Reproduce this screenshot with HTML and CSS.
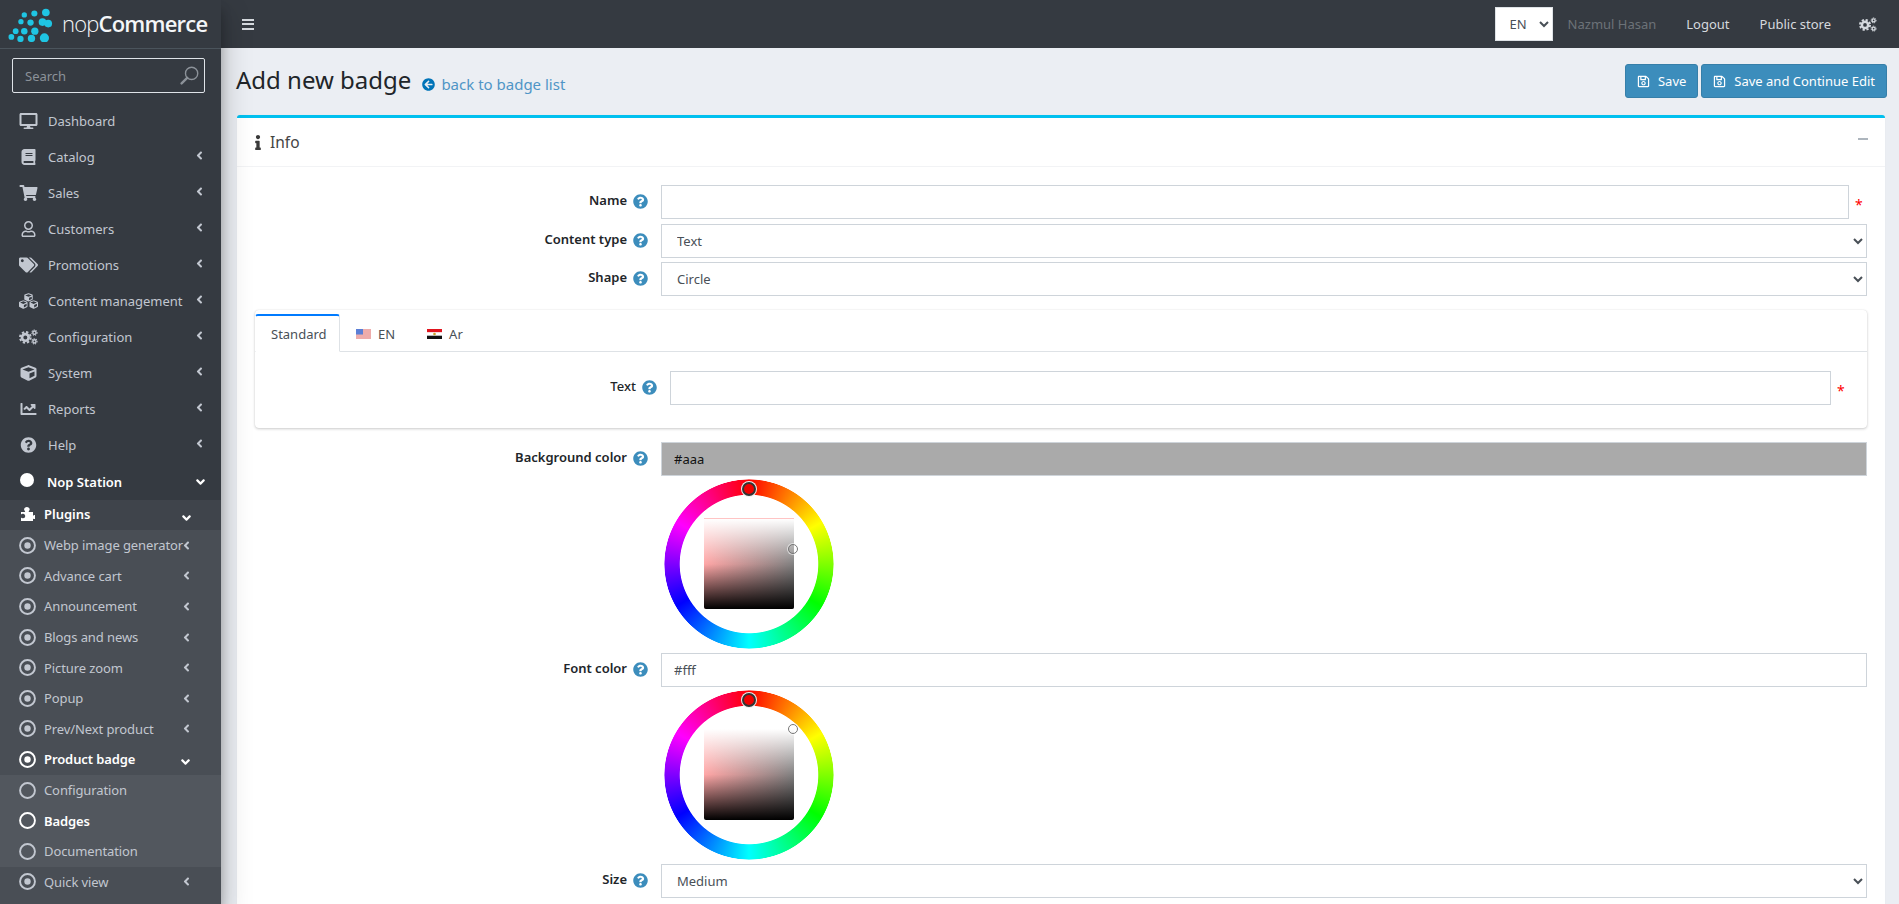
FILE: index.html
```html
<!DOCTYPE html>
<html lang="en">
<head>
<meta charset="utf-8">
<title>Add new badge</title>
<link rel="stylesheet" href="styles.css">
</head>
<body>
<svg class="sprite" aria-hidden="true">
  <symbol id="i-desktop" viewBox="0 0 576 512"><path d="M528 0H48C21.5 0 0 21.5 0 48v320c0 26.5 21.5 48 48 48h192l-16 48h-72c-13.3 0-24 10.7-24 24s10.7 24 24 24h272c13.3 0 24-10.7 24-24s-10.7-24-24-24h-72l-16-48h192c26.5 0 48-21.5 48-48V48c0-26.5-21.5-48-48-48zm-16 352H64V64h448v288z"/></symbol>
  <symbol id="i-book" viewBox="0 0 448 512"><path d="M448 360V24c0-13.3-10.7-24-24-24H96C43 0 0 43 0 96v320c0 53 43 96 96 96h328c13.3 0 24-10.7 24-24v-16c0-7.5-3.5-14.3-8.9-18.7-4.2-15.4-4.2-59.3 0-74.7 5.4-4.3 8.9-11.1 8.9-18.6zM128 134c0-3.3 2.7-6 6-6h212c3.3 0 6 2.7 6 6v20c0 3.3-2.7 6-6 6H134c-3.3 0-6-2.7-6-6v-20zm0 64c0-3.3 2.7-6 6-6h212c3.3 0 6 2.7 6 6v20c0 3.3-2.7 6-6 6H134c-3.3 0-6-2.7-6-6v-20zm253.4 250H96c-17.7 0-32-14.3-32-32 0-17.6 14.4-32 32-32h285.4c-1.9 17.1-1.9 46.9 0 64z"/></symbol>
  <symbol id="i-cart" viewBox="0 0 576 512"><path d="M528.12 301.319l47.273-208C578.806 78.301 567.391 64 551.99 64H159.208l-9.166-44.81C147.758 8.021 137.93 0 126.529 0H24C10.745 0 0 10.745 0 24v16c0 13.255 10.745 24 24 24h69.883l70.248 343.435C147.325 417.1 136 435.222 136 456c0 30.928 25.072 56 56 56s56-25.072 56-56c0-15.674-6.447-29.835-16.824-40h209.647C430.447 426.165 424 440.326 424 456c0 30.928 25.072 56 56 56s56-25.072 56-56c0-22.172-12.888-41.332-31.579-50.405l5.517-24.276c3.413-15.018-8.002-29.319-23.403-29.319H218.117l-6.545-32h293.145c11.206 0 20.92-7.754 23.403-18.681z"/></symbol>
  <symbol id="i-user" viewBox="0 0 448 512"><path d="M313.6 304c-28.7 0-42.5 16-89.6 16-47.1 0-60.8-16-89.6-16C60.2 304 0 364.2 0 438.4V464c0 26.5 21.5 48 48 48h352c26.5 0 48-21.5 48-48v-25.6c0-74.2-60.2-134.4-134.4-134.4zM400 464H48v-25.6c0-47.6 38.8-86.4 86.4-86.4 14.6 0 38.3 16 89.6 16 51.7 0 74.9-16 89.6-16 47.6 0 86.4 38.8 86.4 86.4V464zM224 288c79.5 0 144-64.5 144-144S303.5 0 224 0 80 64.5 80 144s64.5 144 144 144zm0-240c52.9 0 96 43.1 96 96s-43.1 96-96 96-96-43.1-96-96 43.1-96 96-96z"/></symbol>
  <symbol id="i-tags" viewBox="0 0 640 512"><path d="M497.941 225.941L286.059 14.059A48 48 0 0 0 252.118 0H48C21.49 0 0 21.49 0 48v204.118a48 48 0 0 0 14.059 33.941l211.882 211.882c18.744 18.745 49.136 18.746 67.882 0l204.118-204.118c18.745-18.745 18.745-49.137 0-67.882zM112 160c-26.51 0-48-21.49-48-48s21.49-48 48-48 48 21.49 48 48-21.49 48-48 48zm513.941 133.823L421.823 497.941c-18.745 18.745-49.137 18.745-67.882 0l-.36-.36L527.64 323.522c16.999-16.999 26.36-39.6 26.36-63.64s-9.362-46.641-26.36-63.64L331.397 0h48.721a48 48 0 0 1 33.941 14.059l211.882 211.882c18.745 18.745 18.745 49.137 0 67.882z"/></symbol>
  <symbol id="i-cube" viewBox="0 0 512 512"><path d="M239.1 6.3l-208 78c-18.7 7-31.1 25-31.1 45v225.1c0 18.2 10.3 34.8 26.5 42.9l208 104c13.5 6.8 29.4 6.8 42.9 0l208-104c16.3-8.1 26.5-24.8 26.5-42.9V129.3c0-20-12.4-37.9-31.1-44.9l-208-78C262 2.2 250 2.2 239.1 6.3zM256 68.4l192 72v1.1l-192 78-192-78v-1.1l192-72zm32 356V275.5l160-65v133.9l-160 80z"/></symbol>
  <symbol id="i-cubes" viewBox="0 0 24 20"><use href="#i-cube" x="6.5" y="0" width="11" height="11"/><use href="#i-cube" x="0" y="9" width="11" height="11"/><use href="#i-cube" x="13" y="9" width="11" height="11"/></symbol>
  <symbol id="i-cogs" viewBox="0 0 24 20">
    <circle cx="8" cy="10.5" r="4.2" fill="none" stroke="currentColor" stroke-width="3.4"/>
    <circle cx="8" cy="10.5" r="6.8" fill="none" stroke="currentColor" stroke-width="2.4" stroke-dasharray="3 2.35"/>
    <circle cx="19.5" cy="4.5" r="2" fill="none" stroke="currentColor" stroke-width="1.8"/>
    <circle cx="19.5" cy="4.5" r="3.3" fill="none" stroke="currentColor" stroke-width="1.3" stroke-dasharray="1.6 1.2"/>
    <circle cx="19.5" cy="15.5" r="2" fill="none" stroke="currentColor" stroke-width="1.8"/>
    <circle cx="19.5" cy="15.5" r="3.3" fill="none" stroke="currentColor" stroke-width="1.3" stroke-dasharray="1.6 1.2"/>
  </symbol>
  <symbol id="i-chart" viewBox="0 0 512 512"><path d="M496 384H64V80c0-8.84-7.16-16-16-16H16C7.16 64 0 71.16 0 80v336c0 17.67 14.33 32 32 32h464c8.84 0 16-7.16 16-16v-32c0-8.84-7.16-16-16-16zM464 96H345.94c-21.38 0-32.09 25.85-16.97 40.97l32.4 32.4L288 242.75l-73.37-73.37c-12.5-12.5-32.76-12.5-45.25 0l-68.69 68.69c-6.25 6.25-6.25 16.38 0 22.63l22.62 22.62c6.25 6.25 16.38 6.25 22.63 0L192 237.25l73.37 73.37c12.5 12.5 32.76 12.5 45.25 0l96-96 32.4 32.4c15.12 15.12 40.97 4.41 40.97-16.97V112c.01-8.84-7.15-16-15.99-16z"/></symbol>
  <symbol id="i-help" viewBox="0 0 512 512"><path d="M504 256c0 136.997-111.043 248-248 248S8 392.997 8 256C8 119.083 119.043 8 256 8s248 111.083 248 248zM262.655 90c-54.497 0-89.255 22.957-116.549 63.758-3.536 5.286-2.353 12.415 2.715 16.258l34.699 26.31c5.205 3.947 12.621 3.008 16.665-2.122 17.864-22.658 30.113-35.797 57.303-35.797 20.429 0 45.698 13.148 45.698 32.958 0 14.976-12.363 22.667-32.534 33.976C247.128 238.528 216 254.941 216 296v4c0 6.627 5.373 12 12 12h56c6.627 0 12-5.373 12-12v-1.333c0-28.462 83.186-29.647 83.186-106.667 0-58.002-60.165-102-116.531-102zM256 338c-25.365 0-46 20.635-46 46 0 25.364 20.635 46 46 46s46-20.636 46-46c0-25.365-20.635-46-46-46z"/></symbol>
  <symbol id="i-left" viewBox="0 0 256 512"><path d="M31.7 239l136-136c9.4-9.4 24.6-9.4 33.9 0l22.6 22.6c9.4 9.4 9.4 24.6 0 33.9L127.9 256l96.4 96.4c9.4 9.4 9.4 24.6 0 33.9L201.7 409c-9.4 9.4-24.6 9.4-33.9 0l-136-136c-9.5-9.4-9.5-24.6-.1-34z"/></symbol>
  <symbol id="i-down" viewBox="0 0 320 512"><path d="M143 352.3L7 216.3c-9.4-9.4-9.4-24.6 0-33.9l22.6-22.6c9.4-9.4 24.6-9.4 33.9 0l96.4 96.4 96.4-96.4c9.4-9.4 24.6-9.4 33.9 0l22.6 22.6c9.4 9.4 9.4 24.6 0 33.9l-136 136c-9.2 9.4-24.4 9.4-33.8 0z"/></symbol>
  <symbol id="i-puzzle" viewBox="0 0 14 14"><path d="M0 5h3.6c.6 0 .7-.5.3-1-.5-.5-.8-1-.8-1.6C3.100 1 4.400 0 5.900 0s2.800 1 2.800 2.400c0 .6-.3 1.100-.8 1.600-.4.500-.3 1 .3 1H12v3c0 .6.500.7 1 .3.300-.2.600-.3 1-.1v3.800c-.4.200-.7.100-1-.1-.5-.4-1-.3-1 .3V14H0v-2.800c0-.6.500-.7 1-.3.300.3.700.4 1.100.4 1.200 0 2.100-1 2.100-2.300S3.300 6.700 2.100 6.700c-.4 0-.8.100-1.100.4-.5.4-1 .3-1-.3z"/></symbol>
  <symbol id="i-dot" viewBox="0 0 16 16"><circle cx="8" cy="8" r="7" fill="none" stroke="currentColor" stroke-width="1.800"/><circle cx="8" cy="8" r="3"/></symbol>
  <symbol id="i-ring" viewBox="0 0 16 16"><circle cx="8" cy="8" r="7" fill="none" stroke="currentColor" stroke-width="1.800"/></symbol>
  <symbol id="i-save" viewBox="0 0 448 512"><path d="M433.941 129.941l-83.882-83.882A48 48 0 0 0 316.118 32H48C21.49 32 0 53.49 0 80v352c0 26.51 21.49 48 48 48h352c26.51 0 48-21.49 48-48V163.882a48 48 0 0 0-14.059-33.941zM272 80v80H144V80h128zm122 352H54a6 6 0 0 1-6-6V86a6 6 0 0 1 6-6h42v104c0 13.255 10.745 24 24 24h176c13.255 0 24-10.745 24-24V83.882l78.243 78.243a6 6 0 0 1 1.757 4.243V426a6 6 0 0 1-6 6zM224 232c-48.523 0-88 39.477-88 88s39.477 88 88 88 88-39.477 88-88-39.477-88-88-88zm0 128c-22.056 0-40-17.944-40-40s17.944-40 40-40 40 17.944 40 40-17.944 40-40 40z"/></symbol>
  <symbol id="i-back" viewBox="0 0 512 512"><path d="M256 504C119 504 8 393 8 256S119 8 256 8s248 111 248 248-111 248-248 248zm28.900-143.600L209.400 288H392c13.300 0 24-10.700 24-24v-16c0-13.300-10.700-24-24-24H209.400l75.500-72.400c9.700-9.300 9.900-24.800.4-34.300l-11-10.900c-9.400-9.400-24.600-9.400-33.900 0L107.700 239c-9.400 9.400-9.400 24.600 0 33.900l132.700 132.700c9.400 9.400 24.600 9.400 33.900 0l11-10.900c9.500-9.500 9.300-25-.4-34.300z"/></symbol>
  <symbol id="i-info" viewBox="0 0 192 512"><path d="M20 424.229h20V279.771H20c-11.046 0-20-8.954-20-20V212c0-11.046 8.954-20 20-20h112c11.046 0 20 8.954 20 20v212.229h20c11.046 0 20 8.954 20 20V492c0 11.046-8.954 20-20 20H20c-11.046 0-20-8.954-20-20v-47.771c0-11.046 8.954-20 20-20zM96 0C56.235 0 24 32.235 24 72s32.235 72 72 72 72-32.235 72-72S135.764 0 96 0z"/></symbol>
  <symbol id="i-search" viewBox="0 0 18 18"><circle cx="11" cy="7" r="5.800" fill="none" stroke="currentColor" stroke-width="1.300"/><path d="M6.800 11.200L1.500 16.500" fill="none" stroke="currentColor" stroke-width="2.200" stroke-linecap="round"/></symbol>
  <symbol id="f-us" viewBox="0 0 15 10"><rect width="15" height="10" fill="#f2f4f8"/><path d="M0 1h15M0 3h15M0 5h15M0 7h15M0 9h15" stroke="#e8655f" stroke-width="1"/><rect width="7" height="5.500" fill="#5b7fd6"/></symbol>
  <symbol id="f-eg" viewBox="0 0 15 10"><rect width="15" height="3.400" fill="#e0141e"/><rect y="3.400" width="15" height="3.300" fill="#fff"/><rect y="6.700" width="15" height="3.300" fill="#111"/><circle cx="7.500" cy="5" r="1.300" fill="#c9a227"/></symbol>
</svg>

<div class="layout">
  <aside class="sidebar">
    <div class="brand">
      <svg class="brand-dots" viewBox="0 0 48 36" aria-hidden="true">
        <circle cx="17" cy="8" r="2.800"/><circle cx="27.500" cy="6.500" r="3.200"/><circle cx="39.500" cy="5.500" r="4"/>
        <circle cx="13.500" cy="15" r="2.800"/><circle cx="23.500" cy="16" r="3.300"/><circle cx="36" cy="15.500" r="4"/><circle cx="42" cy="17" r="4"/>
        <circle cx="8" cy="25" r="3"/><circle cx="17" cy="25" r="3.400"/><circle cx="28" cy="25" r="3.800"/>
        <circle cx="3.500" cy="31" r="3"/><circle cx="13" cy="33" r="3.300"/><circle cx="24.500" cy="32.500" r="3.800"/><circle cx="38" cy="32" r="4.800"/>
      </svg>
      <span class="brand-text"><span class="brand-light">nop</span><b>Commerce</b></span>
    </div>
    <div class="search">
      <span class="search-label">Search</span>
      <svg class="search-icon"><use href="#i-search"/></svg>
    </div>
    <nav>
      <a class="nav-item"><svg class="nav-icon"><use href="#i-desktop"/></svg><span>Dashboard</span></a>
      <a class="nav-item"><svg class="nav-icon"><use href="#i-book"/></svg><span>Catalog</span><svg class="chev"><use href="#i-left"/></svg></a>
      <a class="nav-item"><svg class="nav-icon"><use href="#i-cart"/></svg><span>Sales</span><svg class="chev"><use href="#i-left"/></svg></a>
      <a class="nav-item"><svg class="nav-icon"><use href="#i-user"/></svg><span>Customers</span><svg class="chev"><use href="#i-left"/></svg></a>
      <a class="nav-item"><svg class="nav-icon"><use href="#i-tags"/></svg><span>Promotions</span><svg class="chev"><use href="#i-left"/></svg></a>
      <a class="nav-item"><svg class="nav-icon"><use href="#i-cubes"/></svg><span>Content management</span><svg class="chev"><use href="#i-left"/></svg></a>
      <a class="nav-item"><svg class="nav-icon"><use href="#i-cogs"/></svg><span>Configuration</span><svg class="chev"><use href="#i-left"/></svg></a>
      <a class="nav-item"><svg class="nav-icon"><use href="#i-cube"/></svg><span>System</span><svg class="chev"><use href="#i-left"/></svg></a>
      <a class="nav-item"><svg class="nav-icon"><use href="#i-chart"/></svg><span>Reports</span><svg class="chev"><use href="#i-left"/></svg></a>
      <a class="nav-item"><svg class="nav-icon"><use href="#i-help"/></svg><span>Help</span><svg class="chev"><use href="#i-left"/></svg></a>
      <a class="nav-item nav-open"><span class="nop-dot"></span><span>Nop Station</span><svg class="chev-down"><use href="#i-down"/></svg></a>
    </nav>
    <div class="level2">
      <a class="sub-head"><svg class="puzzle"><use href="#i-puzzle"/></svg><span>Plugins</span><svg class="chev-down sub-down"><use href="#i-down"/></svg></a>
      <div class="level3">
        <a class="sub-item"><svg class="dot"><use href="#i-dot"/></svg><span>Webp image generator</span><svg class="chev sub-chev"><use href="#i-left"/></svg></a>
        <a class="sub-item"><svg class="dot"><use href="#i-dot"/></svg><span>Advance cart</span><svg class="chev sub-chev"><use href="#i-left"/></svg></a>
        <a class="sub-item"><svg class="dot"><use href="#i-dot"/></svg><span>Announcement</span><svg class="chev sub-chev"><use href="#i-left"/></svg></a>
        <a class="sub-item"><svg class="dot"><use href="#i-dot"/></svg><span>Blogs and news</span><svg class="chev sub-chev"><use href="#i-left"/></svg></a>
        <a class="sub-item"><svg class="dot"><use href="#i-dot"/></svg><span>Picture zoom</span><svg class="chev sub-chev"><use href="#i-left"/></svg></a>
        <a class="sub-item"><svg class="dot"><use href="#i-dot"/></svg><span>Popup</span><svg class="chev sub-chev"><use href="#i-left"/></svg></a>
        <a class="sub-item"><svg class="dot"><use href="#i-dot"/></svg><span>Prev/Next product</span><svg class="chev sub-chev"><use href="#i-left"/></svg></a>
        <a class="sub-item sub-active"><svg class="dot"><use href="#i-dot"/></svg><span>Product badge</span><svg class="chev-down sub-down"><use href="#i-down"/></svg></a>
        <div class="level4">
          <a class="sub-item"><svg class="dot"><use href="#i-ring"/></svg><span>Configuration</span></a>
          <a class="sub-item sub-active"><svg class="dot"><use href="#i-ring"/></svg><span>Badges</span></a>
          <a class="sub-item"><svg class="dot"><use href="#i-ring"/></svg><span>Documentation</span></a>
        </div>
        <a class="sub-item"><svg class="dot"><use href="#i-dot"/></svg><span>Quick view</span><svg class="chev sub-chev"><use href="#i-left"/></svg></a>
      </div>
    </div>
  </aside>

  <div class="main">
    <header class="topbar">
      <span class="burger"><i></i><i></i><i></i></span>
      <div class="top-right">
        <select class="lang"><option>EN</option></select>
        <span class="user">Nazmul Hasan</span>
        <a class="top-link">Logout</a>
        <a class="top-link">Public store</a>
        <svg class="top-cogs"><use href="#i-cogs"/></svg>
      </div>
    </header>

    <section class="page-head">
      <h1>Add new badge</h1>
      <a class="back"><svg class="back-icon"><use href="#i-back"/></svg>back to badge list</a>
      <div class="actions">
        <button class="btn"><svg class="btn-icon"><use href="#i-save"/></svg>Save</button>
        <button class="btn"><svg class="btn-icon"><use href="#i-save"/></svg>Save and Continue Edit</button>
      </div>
    </section>

    <section class="card">
      <div class="card-head">
        <svg class="info-icon"><use href="#i-info"/></svg>
        <span class="card-title">Info</span>
        <span class="minus"></span>
      </div>
      <div class="card-body">
        <div class="row row-name">
          <label class="lbl">Name <svg class="q"><use href="#i-help"/></svg></label>
          <div class="field"><input class="ctl" type="text"><span class="req">*</span></div>
        </div>
        <div class="row">
          <label class="lbl">Content type <svg class="q"><use href="#i-help"/></svg></label>
          <select class="ctl"><option>Text</option></select>
        </div>
        <div class="row">
          <label class="lbl">Shape <svg class="q"><use href="#i-help"/></svg></label>
          <select class="ctl"><option>Circle</option></select>
        </div>

        <div class="tabs">
          <div class="tab-bar">
            <span class="tab tab-active">Standard</span>
            <span class="tab"><svg class="flag"><use href="#f-us"/></svg>EN</span>
            <span class="tab"><svg class="flag"><use href="#f-eg"/></svg>Ar</span>
          </div>
          <div class="tab-pane">
            <label class="lbl lbl-tab">Text <svg class="q"><use href="#i-help"/></svg></label>
            <div class="field"><input class="ctl" type="text"><span class="req">*</span></div>
          </div>
        </div>

        <div class="row row-color">
          <label class="lbl">Background color <svg class="q"><use href="#i-help"/></svg></label>
          <input class="ctl ctl-grey" type="text" value="#aaa">
        </div>
        <div class="row-wheel">
          <div class="wheel">
            <div class="ring"></div>
            <div class="sv sv-edge"></div>
            <span class="hue-mark"></span>
            <span class="sv-mark sv-mark-a"></span>
          </div>
        </div>
        <div class="row row-color">
          <label class="lbl">Font color <svg class="q"><use href="#i-help"/></svg></label>
          <input class="ctl" type="text" value="#fff">
        </div>
        <div class="row-wheel">
          <div class="wheel">
            <div class="ring"></div>
            <div class="sv"></div>
            <span class="hue-mark"></span>
            <span class="sv-mark sv-mark-b"></span>
          </div>
        </div>
        <div class="row row-color">
          <label class="lbl">Size <svg class="q"><use href="#i-help"/></svg></label>
          <select class="ctl"><option>Medium</option></select>
        </div>
      </div>
    </section>
  </div>
</div>
</body>
</html>
```
FILE: styles.css
```css
* { box-sizing: border-box; }
html, body { margin: 0; height: 100%; overflow: hidden; }
body { font-family: "Noto Sans", "Open Sans", sans-serif; font-size: 13px; color: #212529; background: #ebeef3; }
.sprite { position: absolute; width: 0; height: 0; }
a { text-decoration: none; color: inherit; }

.layout { display: flex; height: 904px; }

/* sidebar */
.sidebar { width: 221px; flex: none; background: #353a41; color: #c2c7d0; position: relative; z-index: 2; box-shadow: 0 14px 28px rgba(0,0,0,.25), 0 10px 10px rgba(0,0,0,.22); overflow: hidden; display: flex; flex-direction: column; }
.brand { height: 49px; flex: none; border-bottom: 1px solid #4b545c; display: flex; align-items: center; padding-left: 8px; gap: 8px; }
.brand-dots { width: 46px; height: 35px; fill: #1fc5e3; flex: none; }
.brand-text { font-family: "Open Sans", sans-serif; font-size: 22px; letter-spacing: -.8px; color: #f4f6f8; line-height: 1; margin-top: -3px; }
.brand-light { font-weight: 300; }
.brand-text b { font-weight: 600; }
.search { margin: 9px 16px 10px 12px; height: 35px; flex: none; border: 1px solid #dfe3e8; border-radius: 2px; display: flex; align-items: center; justify-content: space-between; padding: 0 5px 0 12px; color: #8c9299; }
.search-label { font-size: 13px; }
.search-icon { width: 19px; height: 19px; fill: none; color: #8c9299; }

.nav-item { height: 36px; display: flex; align-items: center; padding: 0 18px 0 19px; }
.nav-icon { width: 19px; height: 16px; margin-right: 10px; fill: currentColor; flex: none; color: #c2c7d0; }
.nav-item > span { flex: 1; white-space: nowrap; }
.chev { width: 7px; height: 13px; fill: currentColor; flex: none; margin-top: -4px; }
.chev-down { width: 9px; height: 14px; fill: #fff; flex: none; }
.nav-open { color: #fff; font-weight: 600; height: 37px; padding-right: 16px; }
.nop-dot { flex: none !important; width: 14px; height: 14px; border-radius: 50%; background: #fff; margin: -3px 13px 0 1px; }

.level2 { background: #3f444b; flex: 1; }
.sub-head { height: 30px; display: flex; align-items: center; color: #fff; font-weight: 600; padding: 0 30px 0 21px; }
.sub-head > span { flex: 1; margin-top: -3px; }
.puzzle { width: 14px; height: 14px; fill: #fff; margin-right: 9px; flex: none; margin-top: -3px; }
.sub-down { margin-top: 6px; }
.level3 { background: #494e55; height: 375px; }
.level4 { background: #52575e; }
.sub-item { height: 30.600px; display: flex; align-items: center; padding: 0 31px 0 19px; }
.sub-item > span { flex: 1; white-space: nowrap; letter-spacing: -.1px; }
.dot { width: 17px; height: 17px; margin-right: 8px; fill: currentColor; flex: none; }
.sub-chev { margin-top: 0; margin-left: -8px; }
.sub-active { color: #fff; font-weight: 600; }

/* main */
.main { flex: 1; min-width: 0; }
.topbar { height: 48px; background: #353a41; display: flex; align-items: center; padding: 0 22px 0 21px; color: #d5d9de; }
.burger { display: flex; flex-direction: column; gap: 2.500px; width: 12px; }
.burger i { height: 2px; background: #d5d9de; display: block; }
.top-right { margin-left: auto; display: flex; align-items: center; }
.lang { width: 58px; height: 34px; border: 1px solid #dee2e6; background: #fff; color: #495057; font: inherit; padding-left: 10px; border-radius: 0; }
.user { color: #6c7278; margin-left: 15px; }
.top-link { margin-left: 30px; }
.user, .top-link { white-space: nowrap; }
.top-cogs { width: 18px; height: 15px; margin-left: 28px; color: #d5d9de; fill: currentColor; }

.page-head { height: 67px; display: flex; align-items: center; padding: 0 12px 0 15px; }
h1 { margin: -3px 0 0; font-size: 24px; font-weight: 400; color: #212529; line-height: 1; }
.back { margin-left: 11px; font-size: 15px; color: #4f95c6; display: flex; align-items: center; margin-top: 5px; }
.back-icon { width: 13px; height: 13px; margin-right: 6px; fill: #0074b8; }
.actions { margin-left: auto; display: flex; gap: 3px; margin-top: -1px; }
.btn { height: 34px; border: 1px solid #367fa9; border-radius: 3px; background: #3c8dbc; color: #fff; font: inherit; padding: 0 11px; display: flex; align-items: center; }
.btn-icon { width: 13px; height: 13px; margin-right: 8px; fill: #fff; }

.card { margin: 0 14px 0 16px; background: #fff; border-top: 3px solid #00c0ef; border-radius: 3px 3px 0 0; height: 789px; overflow: hidden; box-shadow: 0 0 1px rgba(0,0,0,.1); }
.card-head { height: 49px; border-bottom: 1px solid #f2f3f5; display: flex; align-items: center; padding: 0 17px 0 18px; }
.info-icon { width: 6px; height: 15px; fill: #3a3a3a; margin-right: 9px; flex: none; }
.card-title { font-size: 15.500px; color: #444; flex: 1; }
.minus { width: 10px; height: 2px; background: #adb5bd; margin-top: -6px; }
.card-body { padding: 18px 18px 0 0; }

.row { display: grid; grid-template-columns: 424px 1fr; margin-bottom: 4px; }
.row-name { margin-bottom: 5px; }
.lbl { display: flex; align-items: center; justify-content: flex-end; gap: 6px; padding-right: 13px; font-weight: 600; height: 30px; white-space: nowrap; }
.q { width: 15px; height: 15px; fill: #3c8dbc; flex: none; margin-top: 2px; }
.field { display: flex; align-items: center; }
.ctl { height: 34px; width: 100%; border: 1px solid #ced4da; border-radius: 0; background: #fff; font: inherit; color: #495057; padding: 0 12px; display: block; }
select.ctl { padding-left: 11px; }
.req { width: 18px; flex: none; color: #f00; padding-left: 6px; font-size: 14px; line-height: 1; margin-top: 6px; }
.ctl-grey { background: #aaa; color: #111; }

.tabs { margin: 14px 0 14px 18px; height: 118px; border-radius: 4px; box-shadow: 0 0 1px rgba(0,0,0,.125), 0 1px 3px rgba(0,0,0,.2); padding-top: 4px; }
.tab-bar { height: 38px; display: flex; border-bottom: 1px solid #dee2e6; }
.tab { height: 38px; padding: 0 15px; display: flex; align-items: center; color: #495057; border: 1px solid transparent; border-top-width: 2px; }
.tab-active { border-color: #007bff #dee2e6 #fff transparent; border-radius: 3px 3px 0 0; width: 85px; white-space: nowrap; }
.flag { width: 15px; height: 10px; margin-right: 7px; flex: none; }
.tab-pane { display: grid; grid-template-columns: 415px 1fr; padding: 19px 18px 0 0; }
.lbl-tab { font-weight: 500; gap: 6px; }
.row-color { margin-bottom: 3px; }
.row-wheel { padding-left: 427px; height: 174px; }

.wheel { width: 170px; height: 170px; position: relative; }
.ring { position: absolute; inset: 0; border-radius: 50%; background: conic-gradient(#f00, #ff0, #0f0, #0ff, #00f, #f0f, #f00); -webkit-mask: radial-gradient(circle closest-side, transparent 81%, #000 82%, #000 99%, transparent 100%); mask: radial-gradient(circle closest-side, transparent 81%, #000 82%, #000 99%, transparent 100%); }
.sv { position: absolute; left: 40px; top: 39px; width: 90px; height: 91px; border-radius: 0 0 2px 2px; background: linear-gradient(to bottom, #fff 0%, rgba(255,255,255,0) 50%, rgba(0,0,0,0) 50%, #000 100%), linear-gradient(to right, #ffa6a6, #808080); }
.sv-edge { border-top: 1px solid #ffc4c4; }
.hue-mark { position: absolute; left: 78px; top: 3px; width: 14px; height: 14px; border-radius: 50%; background: #e00; border: 2px solid #333; box-shadow: 0 0 0 1px #eee; }
.sv-mark { position: absolute; left: 124px; width: 10px; height: 10px; border-radius: 50%; border: 1.500px solid #777; box-shadow: 0 0 0 1px rgba(255,255,255,.6); }
.sv-mark-a { top: 65px; }
.sv-mark-b { top: 34px; }
```
